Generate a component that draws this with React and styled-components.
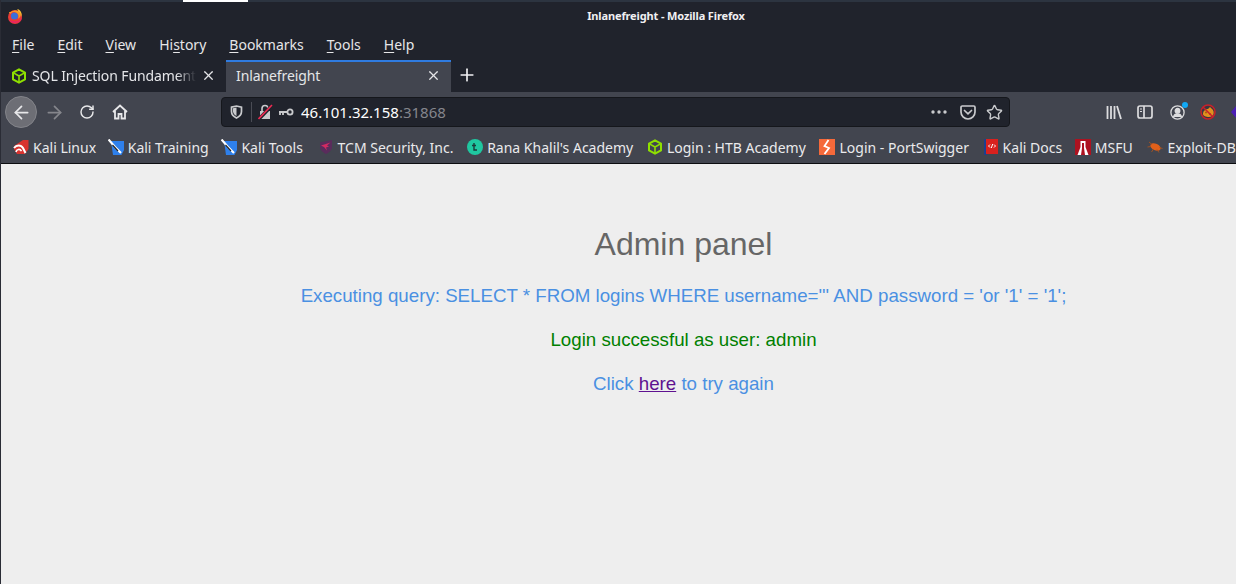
import React from 'react'
import styled, { createGlobalStyle } from 'styled-components'
import { X, Plus, ArrowLeft, ArrowRight, RotateCw, Star } from 'lucide-react'

const Global = createGlobalStyle`
html, body {
  margin: 0;
  padding: 0;
  height: 100%;
  overflow: hidden;
  background: #eeeeee;
}
`

const Window = styled.div`
width: 1236px;
height: 584px;
display: flex;
flex-direction: column;
overflow: hidden;
border-left: 1px solid #2a2c35;
box-sizing: border-box;
font-family: "Noto Sans", sans-serif;
`

const TopStrip = styled.div`
height: 2px;
flex: none;
background: #2c3440;
padding-left: 182px;
`

const StripMark = styled.div`
width: 65px;
height: 2px;
background: #ffffff;
`

const Chrome = styled.div`
background: #20232c;
flex: none;
`

const TitleBar = styled.div`
height: 28px;
display: flex;
align-items: center;
justify-content: center;
position: relative;
color: #f0f0f2;
font-size: 11px;
font-weight: 700;
letter-spacing: -0.13px;
box-sizing: border-box;
padding: 0 0 1px 95px;
`

const AppIcon = styled.svg`
position: absolute;
left: 5px;
top: 5px;
`

const MenuBar = styled.div`
height: 30px;
display: flex;
align-items: center;
gap: 23px;
box-sizing: border-box;
padding: 0 0 2px 11px;
color: #e6e6e8;
font-size: 14px;
`

const MenuItem = styled.span`
margin-right: ${p => p.$nudge || 0}px;
u { text-underline-offset: 2px; text-decoration-thickness: 1px; }
`

const TabStrip = styled.div`
height: 32px;
display: flex;
align-items: stretch;
`

const Tab = styled.div`
width: ${p => p.$width}px;
box-sizing: border-box;
display: flex;
align-items: center;
padding: 0 10px 3px 10px;
gap: 5px;
font-size: 14px;
color: #e4e5e8;
background: ${p => (p.$active ? '#42454f' : 'transparent')};
border-top: 2px solid ${p => (p.$active ? '#2f7be0' : 'transparent')};
`

const TabLabel = styled.span`
flex: 1;
overflow: hidden;
white-space: nowrap;
letter-spacing: -0.1px;
${p => p.$fade && `
  -webkit-mask-image: linear-gradient(to right, #000 88%, transparent);
  mask-image: linear-gradient(to right, #000 88%, transparent);
`}
`

const NewTab = styled.div`
width: 32px;
display: flex;
align-items: center;
justify-content: center;
padding-bottom: 3px;
color: #f0f0f2;
`

const NavBar = styled.div`
height: 40px;
flex: none;
background: #42454f;
display: flex;
align-items: center;
gap: 1px;
box-sizing: border-box;
padding-left: 4px;
`

const BackButton = styled.div`
width: 32px;
height: 32px;
flex: none;
border-radius: 50%;
background: #6d6e75;
border: 1px solid #83848a;
box-sizing: border-box;
display: flex;
align-items: center;
justify-content: center;
color: #e8e8ea;
`

const NavIcon = styled.div`
width: 32px;
height: 32px;
flex: none;
display: flex;
align-items: center;
justify-content: center;
color: ${p => (p.$dim ? '#85868c' : '#e8e8ea')};
`

const UrlBar = styled.div`
width: 789px;
height: 30px;
flex: none;
margin-left: 84px;
background: #20232c;
border: 1px solid #15171c;
border-radius: 4px;
box-sizing: border-box;
display: flex;
align-items: center;
color: #c9cacd;
`

const ShieldSlot = styled.div`
width: 29px;
height: 20px;
border-right: 1px solid #4a4c55;
display: flex;
align-items: center;
justify-content: center;
flex: none;
`

const UrlIcons = styled.div`
display: flex;
align-items: center;
gap: 5px;
padding: 0 7px 0 6px;
`

const UrlText = styled.span`
flex: 1;
font-size: 15px;
color: #ffffff;
white-space: nowrap;
`

const UrlPort = styled.span`
color: #85868c;
`

const UrlActions = styled.div`
display: flex;
align-items: center;
gap: 10px;
padding-right: 6px;
`

const MoreDots = styled.svg`
margin-right: 3px;
`

const Toolbar = styled.div`
margin-left: 95px;
flex: none;
display: flex;
align-items: center;
gap: 15px;
color: #dcdcde;
`

const IconWrap = styled.div`
position: relative;
display: flex;
margin-left: 2px;
`

const Dot = styled.span`
position: absolute;
top: -3px;
right: -3px;
width: 6px;
height: 6px;
border-radius: 50%;
background: #12a9f5;
`

const BookmarkBar = styled.div`
height: 32px;
flex: none;
background: #42454f;
border-bottom: 1px solid #0c0d10;
box-sizing: border-box;
display: flex;
align-items: center;
padding: 0 0 1px 12px;
gap: 12.7px;
overflow: hidden;
`

const Bookmark = styled.div`
display: flex;
align-items: center;
gap: 4px;
font-size: 14px;
color: #eaeaec;
white-space: nowrap;
flex: none;
margin-left: ${p => p.$nudge || 0}px;
`

const Content = styled.main`
flex: 1;
background: #eeeeee;
display: flex;
flex-direction: column;
align-items: center;
font-family: "Liberation Sans", Arial, sans-serif;
padding: 62px 0 0 130px;
`

const Heading = styled.h1`
margin: 0 0 22px;
font-size: 32px;
line-height: 37px;
font-weight: 400;
color: #666666;
`

const Line = styled.p`
margin: 0 0 23px;
font-size: 18.72px;
line-height: 21px;
color: ${p => p.$color || '#4a90e2'};
white-space: nowrap;
`

const HereLink = styled.a`
color: #5e1190;
text-decoration: underline;
`

const Cube = () => (
  <svg width="16" height="16" viewBox="0 0 16 16" fill="none" stroke="#8fe000" strokeWidth="2" strokeLinejoin="round">
    <path d="M8 1.3 14 4.600v6.800L8 14.700 2 11.400V4.600z" />
    <path d="M2 4.600 8 8l6-3.400M8 8v6.700" strokeWidth="1.600" />
  </svg>
)

const Firefox = () => (
  <AppIcon width="18" height="18" viewBox="0 0 18 18">
    <circle cx="9" cy="10" r="7" fill="#ea3b35" />
    <path d="M3 13c2 3 7 4 10.500 1.500C15.500 13 16 11 16 10c-1 3-4 5-7 4.500-2.500-.3-4.500-1-6-1.500z" fill="#e8206a" />
    <circle cx="8.500" cy="9" r="3.600" fill="#3c6fd8" />
    <path d="M11 2c1.200 1 1.400 2 1 3 2 1 3 3 3 5 .6-1 1.300-3-.3-5.500C13.800 3 12.500 2.300 11 2z" fill="#f7c43a" />
    <path d="M3 5c.3 1 1 1.600 1.800 1.800.8-1.300 2-2 3.700-1.800 2 .2 3.800 1.800 4 4 .1 1-.2 2-.7 2.800 2-1 3.300-3 3.200-4.800-1-2.500-3-3.500-5-3.500-2.300 0-4 .5-5 1.500L3 5z" fill="#f59a23" />
  </AppIcon>
)

const Shield = () => (
  <svg width="13" height="14" viewBox="0 0 13 14" fill="none" stroke="#c9cacd" strokeWidth="1.700">
    <path d="M1.500 2.200 6.500 1l5 1.200v4.300c0 3-2.200 5.200-5 6.500-2.800-1.300-5-3.500-5-6.500z" />
    <path d="M6.500 2.500v8.500c-1.800-1-3.300-2.400-3.500-4.500V3.300z" fill="#c9cacd" stroke="none" />
  </svg>
)

const InsecureLock = () => (
  <svg width="15" height="16" viewBox="0 0 15 16" fill="none">
    <path d="M2 7h10v8H2z" fill="#c9cacd" />
    <path d="M4 7V4.500a3 3 0 0 1 6 0V7" stroke="#c9cacd" strokeWidth="1.600" />
    <path d="M0.500 15.500 14 1.500" stroke="#20232c" strokeWidth="3.500" />
    <path d="M0.500 15 14 1" stroke="#ef2b52" strokeWidth="1.600" />
  </svg>
)

const KeyIcon = () => (
  <svg width="16" height="9" viewBox="0 0 16 9" fill="none" stroke="#c9cacd">
    <circle cx="12" cy="4" r="2.600" strokeWidth="1.800" />
    <path d="M9 4H1M2 4v3M5 4v3" strokeWidth="1.800" />
  </svg>
)

const Pocket = () => (
  <svg width="16" height="15" viewBox="0 0 16 15" fill="none" stroke="#c9cacd" strokeWidth="1.700">
    <path d="M1 2.200C1 1.500 1.500 1 2.200 1h11.600c.7 0 1.200.5 1.200 1.200v4.800a7 7 0 0 1-14 0z" />
    <path d="M4.500 5.500 8 8.800l3.500-3.300" strokeLinecap="round" />
  </svg>
)

const LibraryIcon = () => (
  <svg width="16" height="15" viewBox="0 0 16 15" fill="none" stroke="#dcdcde" strokeWidth="1.800">
    <path d="M1.500 1v13M5 1v13M8.500 1v13M11 1l4 13" />
  </svg>
)

const SidebarIcon = () => (
  <svg width="16" height="14" viewBox="0 0 16 14" fill="none" stroke="#dcdcde" strokeWidth="1.700">
    <rect x="1" y="1" width="14" height="12" rx="2" />
    <path d="M7 1v12" />
    <path d="M3 4h2M3 6.500h2" strokeWidth="1.200" />
  </svg>
)

const AccountIcon = () => (
  <svg width="15" height="15" viewBox="0 0 15 15" fill="none" stroke="#dcdcde" strokeWidth="1.300">
    <circle cx="7.500" cy="7.500" r="6.600" />
    <circle cx="7.500" cy="5.800" r="2.300" fill="#dcdcde" />
    <path d="M3.500 12c.5-2 2-3 4-3s3.500 1 4 3" fill="#dcdcde" />
  </svg>
)

const BlockedExtension = () => (
  <svg width="16" height="16" viewBox="0 0 16 16">
    <circle cx="8" cy="8" r="7" fill="#3a3840" stroke="#c9202a" strokeWidth="1.500" />
    <path d="M3 10c0-3 2.500-5 5-5l2-2 2 2c1.200 1 2 2.500 1.600 4.500-.4 2-2.400 3.500-4.600 3.500-3 0-6-1-6-3z" fill="#e2911f" />
    <circle cx="6" cy="8.500" r="1" fill="#a85a10" />
    <circle cx="10" cy="10" r="1" fill="#a85a10" />
    <path d="M3 3l10 10" stroke="#c9202a" strokeWidth="1.500" />
  </svg>
)

const KaliLinux = () => (
  <svg width="16" height="16" viewBox="0 0 16 16">
    <path d="M1 7 10 1h5.500v9L12 15H4L1 10z" fill="#d8332f" />
    <path d="M1 9c2.500-3.500 7-3.500 9 0l2.500 5" fill="none" stroke="#fff" strokeWidth="2" />
    <path d="M3 13c.5-3 4-3.500 5.500-.8" fill="none" stroke="#fff" strokeWidth="1.600" />
  </svg>
)

const KaliBlue = () => (
  <svg width="16" height="16" viewBox="0 0 16 16">
    <path d="M3 2h13v9l-2.500 5H5z" fill="#2e80ec" />
    <path d="M0.500 0.500 7 8l6 6" fill="none" stroke="#fff" strokeWidth="2.200" />
    <path d="M4.500 6 10 12" stroke="#222" strokeWidth="1.200" />
  </svg>
)

const TcmIcon = () => (
  <svg width="16" height="16" viewBox="0 0 16 16">
    <path d="M2 3.500 14 1v7c0 3-3 5.500-6 7-2.500-1.500-6-3.500-6-7z" fill="#5a2c5c" />
    <path d="M3 6.500 12.500 3.500 9 6.500l2 1-3 1 1 3-3-3.500z" fill="#d42a62" />
  </svg>
)

const RanaIcon = () => (
  <svg width="16" height="16" viewBox="0 0 16 16">
    <circle cx="8" cy="8" r="8" fill="#1fc7a0" />
    <path d="M7 4v7h3M5 6.500h4" fill="none" stroke="#1a3a3a" strokeWidth="1.400" />
  </svg>
)

const SwiggerIcon = () => (
  <svg width="16" height="16" viewBox="0 0 16 16">
    <rect width="16" height="16" fill="#f5693a" />
    <path d="M9.500 1 5.500 7l4.500 2-4.500 6" fill="none" stroke="#fff" strokeWidth="1.800" />
  </svg>
)

const DocsIcon = () => (
  <svg width="16" height="16" viewBox="0 0 16 16">
    <rect x="1" y="0" width="3" height="16" fill="#1d3f8f" />
    <rect x="3" y="0" width="12" height="15" fill="#d9211e" />
    <path d="M7 5.500 5.500 7 7 8.500M11 5.500 12.500 7 11 8.500M9.700 5 8.300 9" stroke="#fff" fill="none" />
  </svg>
)

const MsfuIcon = () => (
  <svg width="16" height="16" viewBox="0 0 16 16">
    <rect width="16" height="16" fill="#ad1220" />
    <path d="M5.500 2h5v6l3 8h-11l3-8z" fill="#fff" />
    <path d="M7 4h2v5l1 7H6l1-7z" fill="#ad1220" />
  </svg>
)

const ExploitIcon = () => (
  <svg width="16" height="16" viewBox="0 0 16 16">
    <ellipse cx="8.500" cy="8" rx="5.500" ry="3.200" fill="#e2601a" transform="rotate(25 8.500 8)" />
    <path d="M2 3l3 2.500M0.500 8l3.500-.5M4.500 13l2-3M12 13.500l-2-3M15.500 9.500l-3-1" stroke="#a8521e" strokeWidth="0.900" />
  </svg>
)

const bookmarks = [
  ['Kali Linux', <KaliLinux />, 0],
  ['Kali Training', <KaliBlue />, -1],
  ['Kali Tools', <KaliBlue />, 0],
  ['TCM Security, Inc.', <TcmIcon />, 2],
  ["Rana Khalil's Academy", <RanaIcon />, 1],
  ['Login : HTB Academy', <Cube />, 1],
  ['Login - PortSwigger', <SwiggerIcon />, 1],
  ['Kali Docs', <DocsIcon />, 1],
  ['MSFU', <MsfuIcon />, 0],
  ['Exploit-DB', <ExploitIcon />, 2],
]

const menus = [
  ['F', 'ile'],
  ['E', 'dit'],
  ['V', 'iew'],
  ['Hi', 's', 'tory'],
  ['B', 'ookmarks'],
  ['T', 'ools'],
  ['H', 'elp'],
]

const App = () => {
  return (
    <Window>
      <Global />
      <TopStrip><StripMark /></TopStrip>
      <Chrome>
        <TitleBar>
          <Firefox />
          Inlanefreight - Mozilla Firefox
        </TitleBar>
        <MenuBar>
          {menus.map(m => (
            <MenuItem key={m.join('')}>
              {m.length === 3 ? <>{m[0]}<u>{m[1]}</u>{m[2]}</> : <><u>{m[0]}</u>{m[1]}</>}
            </MenuItem>
          ))}
        </MenuBar>
        <TabStrip>
          <Tab $width={225}>
            <Cube />
            <TabLabel $fade>SQL Injection Fundamentals</TabLabel>
            <X size={15} strokeWidth={2} />
          </Tab>
          <Tab $width={225} $active>
            <TabLabel>Inlanefreight</TabLabel>
            <X size={15} strokeWidth={2} />
          </Tab>
          <NewTab><Plus size={20} strokeWidth={2} /></NewTab>
        </TabStrip>
      </Chrome>
      <NavBar>
        <BackButton><ArrowLeft size={21} strokeWidth={2} /></BackButton>
        <NavIcon $dim><ArrowRight size={21} strokeWidth={2} /></NavIcon>
        <NavIcon><RotateCw size={16} strokeWidth={2.2} /></NavIcon>
        <NavIcon>
          <svg width="16" height="16" viewBox="0 0 16 16" fill="none" stroke="#e8e8ea" strokeWidth="1.800">
            <path d="M1 8 8 1.500 15 8M3 7v7.500h3.500V10h3v4.500H13V7" />
          </svg>
        </NavIcon>
        <UrlBar>
          <ShieldSlot><Shield /></ShieldSlot>
          <UrlIcons><InsecureLock /><KeyIcon /></UrlIcons>
          <UrlText>46.101.32.158<UrlPort>:31868</UrlPort></UrlText>
          <UrlActions>
            <MoreDots width="16" height="4" viewBox="0 0 16 4" fill="#c9cacd">
              <circle cx="2" cy="2" r="1.700" /><circle cx="8" cy="2" r="1.700" /><circle cx="14" cy="2" r="1.700" />
            </MoreDots>
            <Pocket />
            <Star size={17} strokeWidth={2} />
          </UrlActions>
        </UrlBar>
        <Toolbar>
          <LibraryIcon />
          <SidebarIcon />
          <IconWrap><AccountIcon /><Dot /></IconWrap>
          <BlockedExtension />
          <svg width="16" height="14" viewBox="0 0 16 14"><path d="M0 7l5-6 5 6-5 6z" fill="#4b1fb5" /></svg>
        </Toolbar>
      </NavBar>
      <BookmarkBar>
        {bookmarks.map(([label, icon, nudge]) => (
          <Bookmark key={label} $nudge={nudge}>{icon}{label}</Bookmark>
        ))}
      </BookmarkBar>
      <Content>
        <Heading>Admin panel</Heading>
        <Line>Executing query: SELECT * FROM logins WHERE username=''' AND password = 'or '1' = '1';</Line>
        <Line $color="#008000">Login successful as user: admin</Line>
        <Line>Click <HereLink href="#">here</HereLink> to try again</Line>
      </Content>
    </Window>
  )
}

export default App
